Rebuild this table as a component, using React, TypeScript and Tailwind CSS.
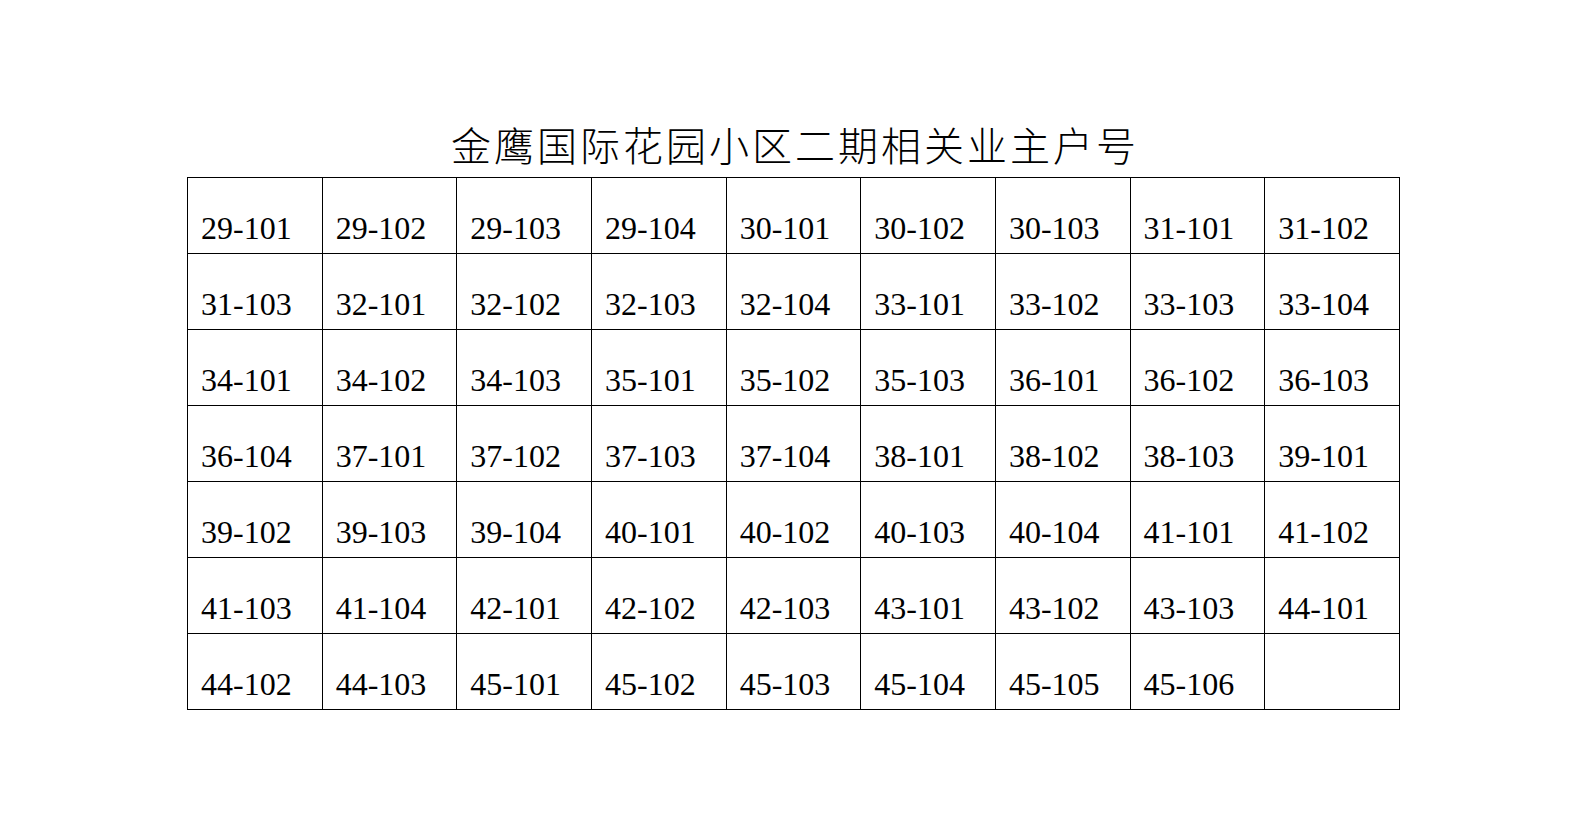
// App.tsx
// 金鹰国际花园小区二期 owner unit list, laid out as a plain bordered table.

const UNITS: string[] = [
  "29-101", "29-102", "29-103", "29-104", "30-101", "30-102", "30-103", "31-101", "31-102",
  "31-103", "32-101", "32-102", "32-103", "32-104", "33-101", "33-102", "33-103", "33-104",
  "34-101", "34-102", "34-103", "35-101", "35-102", "35-103", "36-101", "36-102", "36-103",
  "36-104", "37-101", "37-102", "37-103", "37-104", "38-101", "38-102", "38-103", "39-101",
  "39-102", "39-103", "39-104", "40-101", "40-102", "40-103", "40-104", "41-101", "41-102",
  "41-103", "41-104", "42-101", "42-102", "42-103", "43-101", "43-102", "43-103", "44-101",
  "44-102", "44-103", "45-101", "45-102", "45-103", "45-104", "45-105", "45-106", "",
];

const COLS = 9;

function rows(items: string[]): string[][] {
  const out: string[][] = [];
  for (let i = 0; i < items.length; i += COLS) out.push(items.slice(i, i + COLS));
  return out;
}

export default function App() {
  return (
    <div className="min-h-[835px] w-full bg-white text-black">
      <div className="pt-[118px]">
        <div className="mx-auto w-[1213px]">
          <h1
            className="pl-[3px] text-center text-[40px] font-light leading-[52px] tracking-[3px]"
            style={{ fontFamily: '"Noto Sans CJK SC", "Noto Sans", sans-serif' }}
          >
            金鹰国际花园小区二期相关业主户号
          </h1>
          <table
            className="mt-[7px] w-[1213px] table-fixed border-collapse"
            style={{ fontFamily: '"Liberation Serif", "Times New Roman", serif' }}
          >
            <tbody>
              {rows(UNITS).map((r, i) => (
                <tr key={i} className="h-[76px]">
                  {r.map((u, j) => (
                    <td
                      key={j}
                      className="border border-black pb-[7px] pl-[13px] align-bottom text-[32px] leading-[36px]"
                    >
                      {u}
                    </td>
                  ))}
                </tr>
              ))}
            </tbody>
          </table>
        </div>
      </div>
    </div>
  );
}
